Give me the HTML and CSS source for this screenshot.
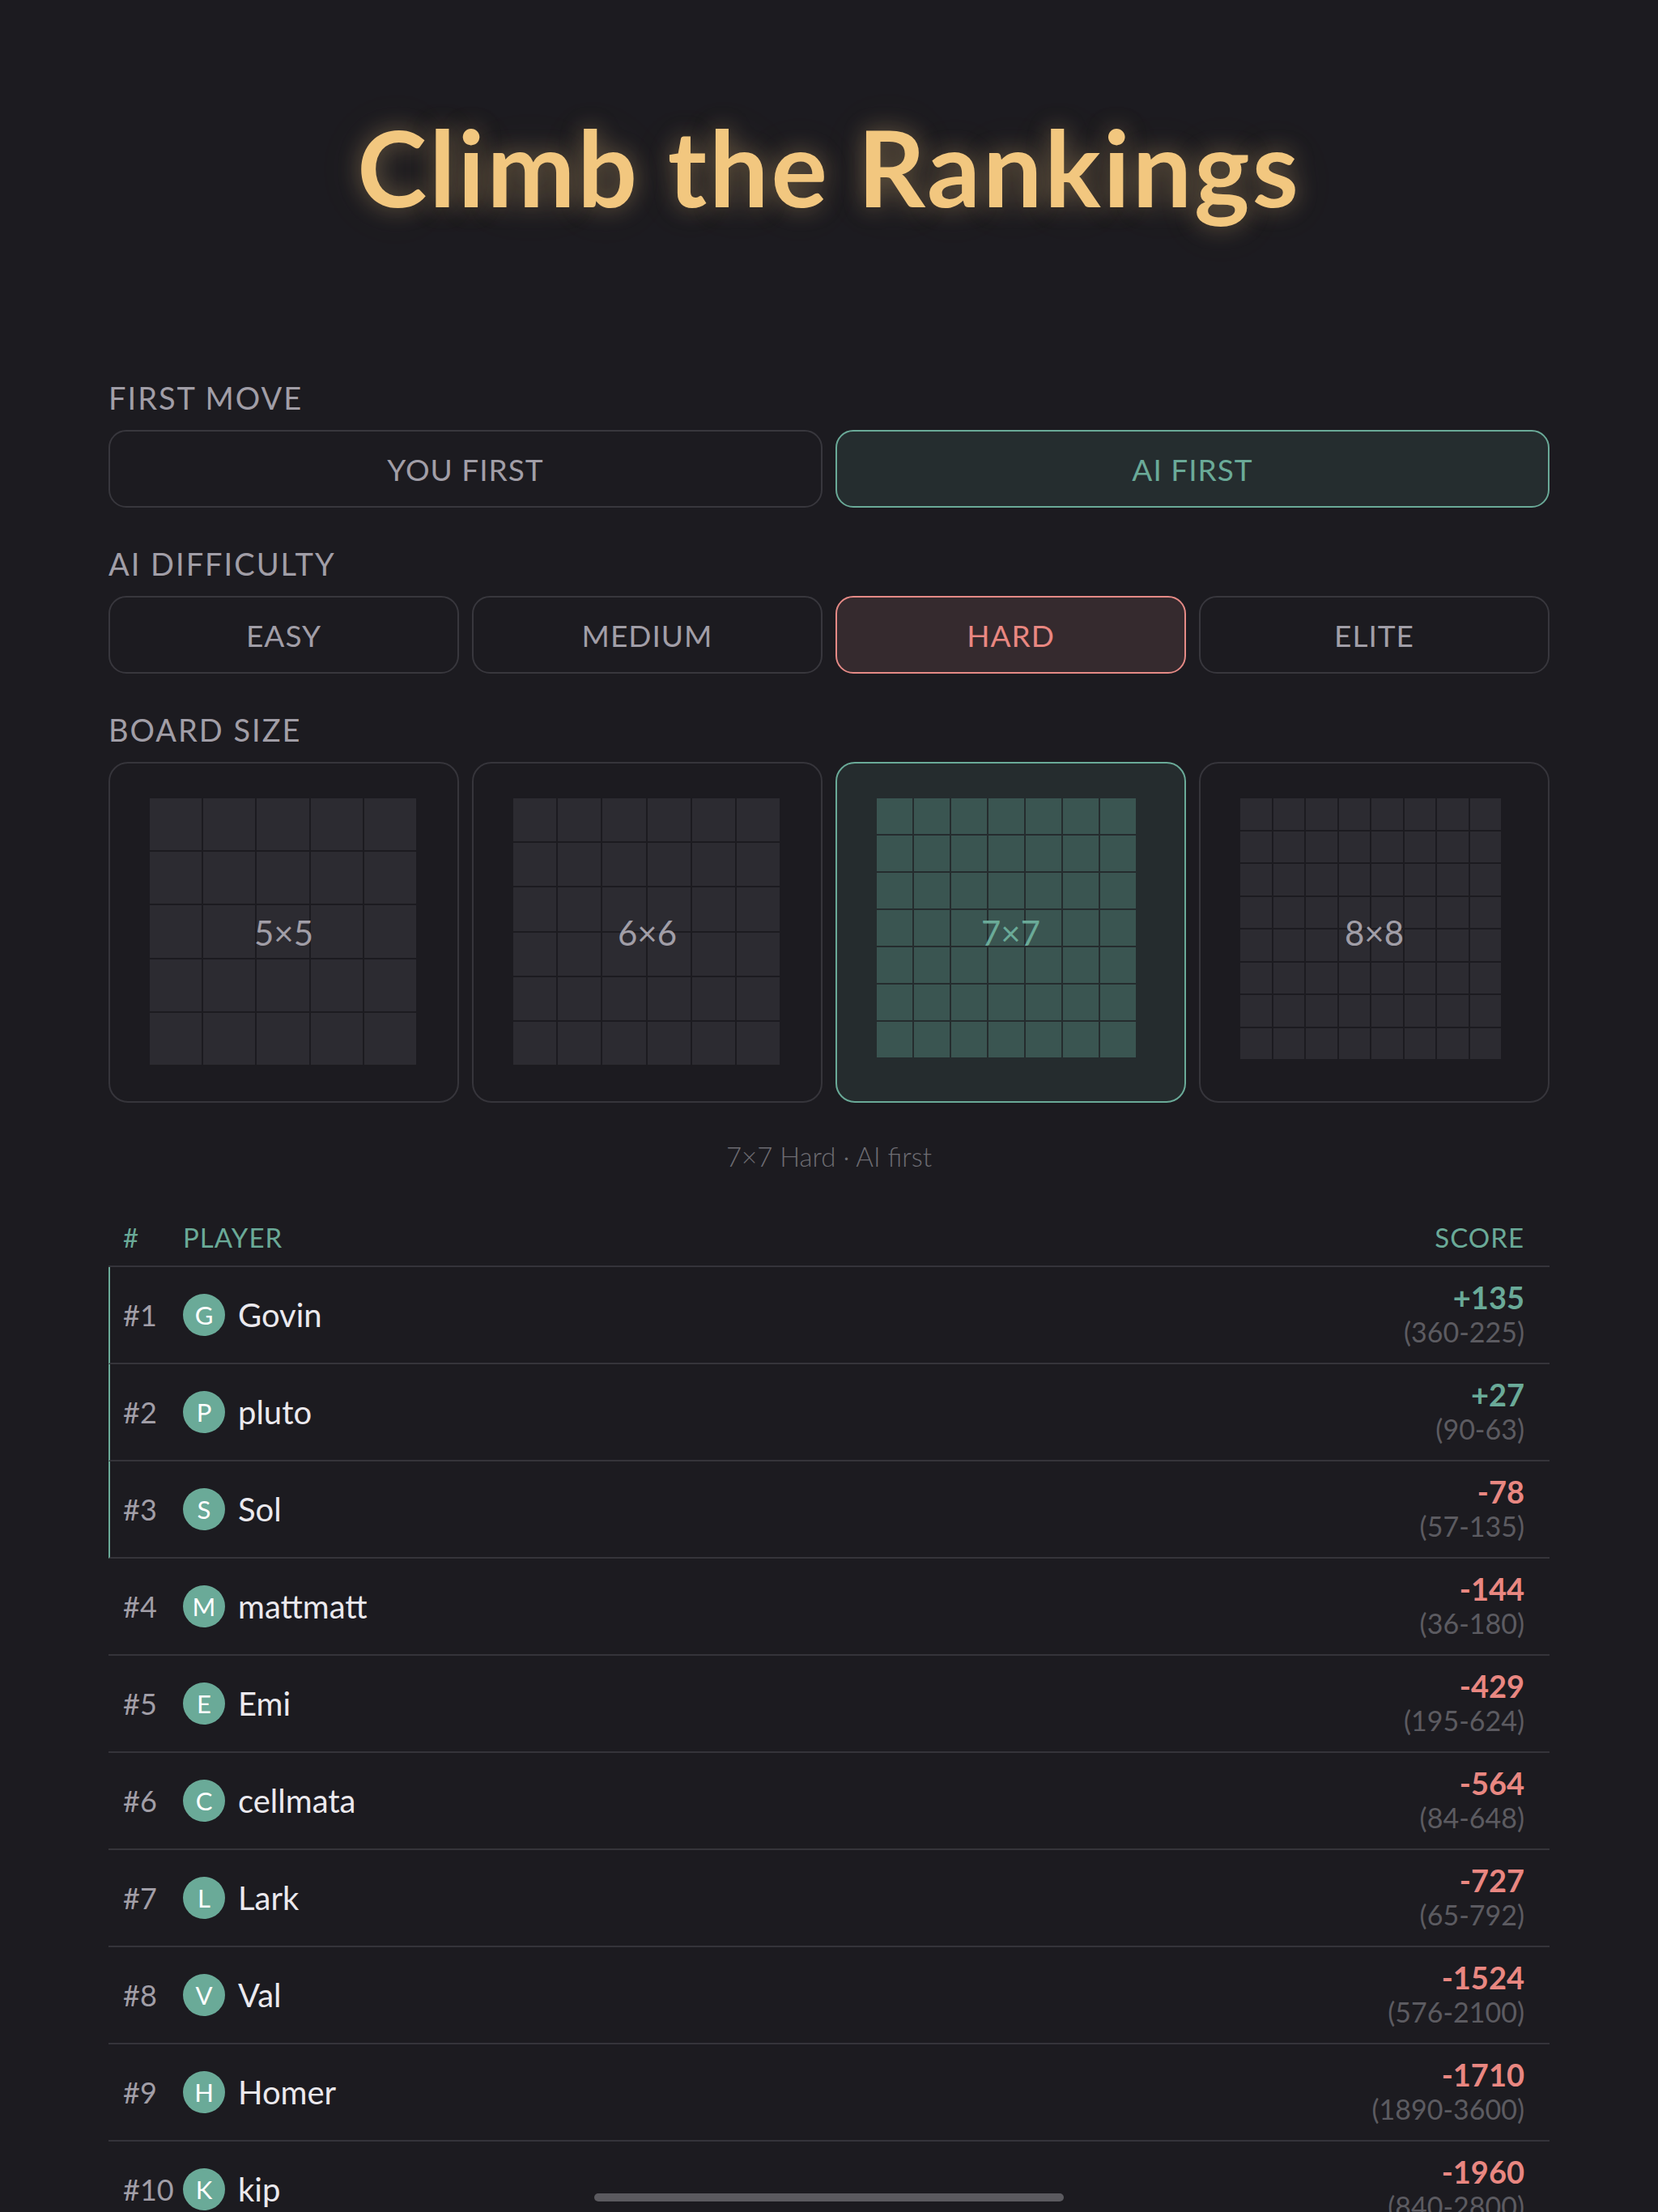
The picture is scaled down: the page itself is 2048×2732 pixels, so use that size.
FILE: index.html
```html
<!DOCTYPE html>
<html lang="en">
<head>
<meta charset="utf-8">
<title>Climb the Rankings</title>
<link rel="stylesheet" href="styles.css">
</head>
<body>
<main class="page">
  <h1 class="title">Climb the Rankings</h1>

  <section class="group">
    <div class="label">FIRST MOVE</div>
    <div class="seg seg-2">
      <button class="opt">YOU FIRST</button>
      <button class="opt opt-teal">AI FIRST</button>
    </div>
  </section>

  <section class="group">
    <div class="label">AI DIFFICULTY</div>
    <div class="seg seg-4">
      <button class="opt">EASY</button>
      <button class="opt">MEDIUM</button>
      <button class="opt opt-red">HARD</button>
      <button class="opt">ELITE</button>
    </div>
  </section>

  <section class="group">
    <div class="label">BOARD SIZE</div>
    <div class="boards">
      <div class="board">
        <div class="cells cells-5">
          <i></i><i></i><i></i><i></i><i></i><i></i><i></i><i></i><i></i><i></i><i></i><i></i><i></i><i></i><i></i><i></i><i></i><i></i><i></i><i></i><i></i><i></i><i></i><i></i><i></i>
        </div>
        <span class="board-name">5×5</span>
      </div>
      <div class="board">
        <div class="cells cells-6">
          <i></i><i></i><i></i><i></i><i></i><i></i><i></i><i></i><i></i><i></i><i></i><i></i><i></i><i></i><i></i><i></i><i></i><i></i><i></i><i></i><i></i><i></i><i></i><i></i><i></i><i></i><i></i><i></i><i></i><i></i><i></i><i></i><i></i><i></i><i></i><i></i>
        </div>
        <span class="board-name">6×6</span>
      </div>
      <div class="board board-active">
        <div class="cells cells-7">
          <i></i><i></i><i></i><i></i><i></i><i></i><i></i><i></i><i></i><i></i><i></i><i></i><i></i><i></i><i></i><i></i><i></i><i></i><i></i><i></i><i></i><i></i><i></i><i></i><i></i><i></i><i></i><i></i><i></i><i></i><i></i><i></i><i></i><i></i><i></i><i></i><i></i><i></i><i></i><i></i><i></i><i></i><i></i><i></i><i></i><i></i><i></i><i></i><i></i>
        </div>
        <span class="board-name">7×7</span>
      </div>
      <div class="board">
        <div class="cells cells-8">
          <i></i><i></i><i></i><i></i><i></i><i></i><i></i><i></i><i></i><i></i><i></i><i></i><i></i><i></i><i></i><i></i><i></i><i></i><i></i><i></i><i></i><i></i><i></i><i></i><i></i><i></i><i></i><i></i><i></i><i></i><i></i><i></i><i></i><i></i><i></i><i></i><i></i><i></i><i></i><i></i><i></i><i></i><i></i><i></i><i></i><i></i><i></i><i></i><i></i><i></i><i></i><i></i><i></i><i></i><i></i><i></i><i></i><i></i><i></i><i></i><i></i><i></i><i></i><i></i>
        </div>
        <span class="board-name">8×8</span>
      </div>
    </div>
  </section>

  <p class="caption">7×7 Hard · AI first</p>

  <section class="table">
    <div class="thead">
      <span class="col-rank">#</span>
      <span class="col-player">PLAYER</span>
      <span class="col-score">SCORE</span>
    </div>

    <div class="row row-top">
      <span class="rank">#1</span>
      <span class="avatar">G</span>
      <span class="name">Govin</span>
      <div class="score"><span class="delta pos">+135</span><span class="rec">(360-225)</span></div>
    </div>
    <div class="row row-top">
      <span class="rank">#2</span>
      <span class="avatar">P</span>
      <span class="name">pluto</span>
      <div class="score"><span class="delta pos">+27</span><span class="rec">(90-63)</span></div>
    </div>
    <div class="row row-top">
      <span class="rank">#3</span>
      <span class="avatar">S</span>
      <span class="name">Sol</span>
      <div class="score"><span class="delta neg">-78</span><span class="rec">(57-135)</span></div>
    </div>
    <div class="row">
      <span class="rank">#4</span>
      <span class="avatar">M</span>
      <span class="name">mattmatt</span>
      <div class="score"><span class="delta neg">-144</span><span class="rec">(36-180)</span></div>
    </div>
    <div class="row">
      <span class="rank">#5</span>
      <span class="avatar">E</span>
      <span class="name">Emi</span>
      <div class="score"><span class="delta neg">-429</span><span class="rec">(195-624)</span></div>
    </div>
    <div class="row">
      <span class="rank">#6</span>
      <span class="avatar">C</span>
      <span class="name">cellmata</span>
      <div class="score"><span class="delta neg">-564</span><span class="rec">(84-648)</span></div>
    </div>
    <div class="row">
      <span class="rank">#7</span>
      <span class="avatar">L</span>
      <span class="name">Lark</span>
      <div class="score"><span class="delta neg">-727</span><span class="rec">(65-792)</span></div>
    </div>
    <div class="row">
      <span class="rank">#8</span>
      <span class="avatar">V</span>
      <span class="name">Val</span>
      <div class="score"><span class="delta neg">-1524</span><span class="rec">(576-2100)</span></div>
    </div>
    <div class="row">
      <span class="rank">#9</span>
      <span class="avatar">H</span>
      <span class="name">Homer</span>
      <div class="score"><span class="delta neg">-1710</span><span class="rec">(1890-3600)</span></div>
    </div>
    <div class="row">
      <span class="rank">#10</span>
      <span class="avatar">K</span>
      <span class="name">kip</span>
      <div class="score"><span class="delta neg">-1960</span><span class="rec">(840-2800)</span></div>
    </div>
  </section>
</main>
<div class="home-indicator"></div>
</body>
</html>
```

FILE: styles.css
```css
* { box-sizing: border-box; }

html, body {
  margin: 0;
  padding: 0;
  background: #1c1b20;
}

body {
  font-family: Lato, "Noto Sans", "DejaVu Sans", sans-serif;
  color: #e9e7ec;
  overflow: hidden;
}

.page {
  width: 1780px;
  margin: 0 auto;
  padding-top: 131px;
}

.title {
  margin: 0;
  font-size: 130px;
  line-height: 150px;
  font-weight: 700;
  letter-spacing: 3px;
  text-align: center;
  color: #f2c77f;
  text-shadow: 0 0 28px rgba(242, 199, 127, 0.35), 0 0 60px rgba(242, 199, 127, 0.12);
}

.group { margin-top: 46px; }
.group:first-of-type { margin-top: 187px; }

.label {
  font-size: 38px;
  line-height: 46px;
  letter-spacing: 2px;
  color: #a19ea7;
  margin-bottom: 17px;
}

.seg {
  display: grid;
  gap: 16px;
}
.seg-2 { grid-template-columns: 1fr 1fr; }
.seg-4 { grid-template-columns: repeat(4, 1fr); }

.opt {
  height: 96px;
  border: 2px solid #38373d;
  border-radius: 22px;
  background: transparent;
  font-family: inherit;
  font-size: 37px;
  letter-spacing: 1px;
  color: #a19ea7;
  padding: 0;
}
.opt-teal {
  background: #252d2f;
  border-color: #6aaa98;
  color: #6aaa98;
}
.opt-red {
  background: #352a2e;
  border-color: #e58a86;
  color: #e98781;
}

.boards {
  display: grid;
  grid-template-columns: repeat(4, 1fr);
  gap: 16px;
}

.board {
  height: 421px;
  border: 2px solid #36353b;
  border-radius: 24px;
  display: grid;
  place-items: center;
}
.board > * { grid-area: 1 / 1; }

.board-active {
  background: #252c2e;
  border-color: #6aaa98;
}

.cells {
  display: grid;
  gap: 2px;
  background: #1c1b20;
  justify-self: start;
  align-self: start;
  margin: 43px 0 0 49px;
}
.cells i { display: block; background: #2c2b31; }
.cells-5 { width: 329px; height: 329px; grid-template-columns: repeat(5, 1fr); grid-template-rows: repeat(5, 1fr); }
.cells-6 { width: 329px; height: 329px; grid-template-columns: repeat(6, 1fr); grid-template-rows: repeat(6, 1fr); }
.cells-7 { width: 320px; height: 320px; grid-template-columns: repeat(7, 1fr); grid-template-rows: repeat(7, 1fr); background: #252c2e; }
.cells-8 { width: 322px; height: 322px; grid-template-columns: repeat(8, 1fr); grid-template-rows: repeat(8, 1fr); }
.board-active .cells i { background: #3a5551; }

.board-name {
  font-size: 42px;
  color: #a19ea7;
  z-index: 1;
}
.board-active .board-name { color: #6aaa98; }

.caption {
  margin: 46px 0 0;
  font-size: 33px;
  line-height: 40px;
  font-weight: 300;
  text-align: center;
  color: #6d6c72;
}

.table { margin-top: 60px; }

.thead {
  display: flex;
  align-items: center;
  height: 57px;
  padding: 0 31px 15px 18px;
  border-bottom: 2px solid #35343a;
  font-size: 33px;
  line-height: 40px;
  letter-spacing: 1px;
  color: #6aaa98;
}
.col-rank { width: 74px; }
.col-player { flex: 1; }

.row {
  display: flex;
  align-items: center;
  height: 120px;
  padding: 0 31px 0 18px;
  border-bottom: 2px solid #35343a;
}
.row-top { border-left: 2px solid #6aaa98; padding-left: 16px; }

.rank {
  width: 74px;
  font-size: 36px;
  color: #a19ea7;
}
.avatar {
  width: 52px;
  height: 52px;
  border-radius: 50%;
  background: #6aaa98;
  color: #ffffff;
  font-size: 31px;
  display: flex;
  align-items: center;
  justify-content: center;
  margin-right: 16px;
}
.name {
  flex: 1;
  font-size: 40px;
  color: #ebe9ee;
}

.score {
  display: flex;
  flex-direction: column;
  align-items: flex-end;
}
.delta {
  font-size: 38px;
  line-height: 42px;
  font-weight: 700;
}
.delta.pos { color: #6aaa98; }
.delta.neg { color: #e98781; }
.rec {
  font-size: 34px;
  line-height: 44px;
  color: #5c5b61;
}

.home-indicator {
  position: fixed;
  left: 50%;
  bottom: 13px;
  width: 580px;
  height: 10px;
  margin-left: -290px;
  border-radius: 5px;
  background: #5b5a5f;
}
```
